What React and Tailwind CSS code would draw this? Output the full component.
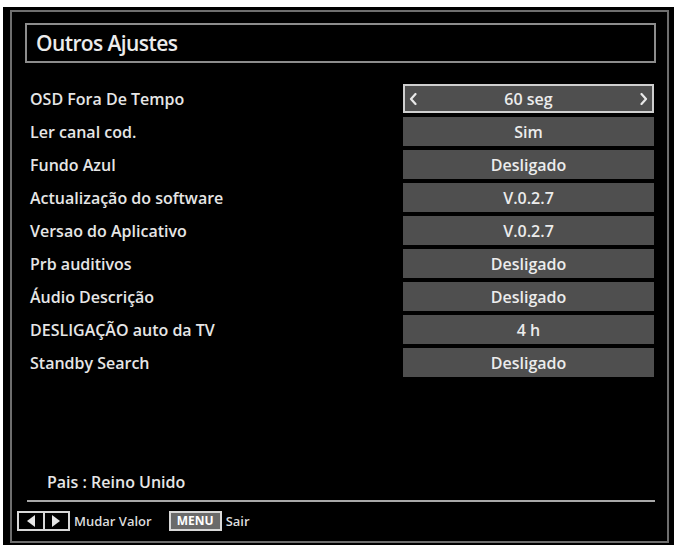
import React from "react";

const rows = [
  ["OSD Fora De Tempo", "60 seg", true],
  ["Ler canal cod.", "Sim"],
  ["Fundo Azul", "Desligado"],
  ["Actualização do software", "V.0.2.7"],
  ["Versao do Aplicativo", "V.0.2.7"],
  ["Prb auditivos", "Desligado"],
  ["Áudio Descrição", "Desligado"],
  ["DESLIGAÇÃO auto da TV", "4 h"],
  ["Standby Search", "Desligado"],
];

const font = { fontFamily: '"Open Sans", "DejaVu Sans", sans-serif' };

function Chevron({ dir }) {
  return (
    <svg width="8" height="13" viewBox="0 0 8 13" className="block">
      <path
        d={dir === "left" ? "M6.5 1.5 L2 6.5 L6.5 11.5" : "M1.5 1.5 L6 6.5 L1.5 11.5"}
        fill="none"
        stroke="#e8e8e8"
        strokeWidth="2.2"
        strokeLinecap="round"
        strokeLinejoin="round"
      />
    </svg>
  );
}

export default function App() {
  return (
    <div className="min-h-screen bg-white pt-[7px] pl-[3px]" style={font}>
      <div className="bg-black h-[538px] pt-[3px] pl-[7px]">
        <div className="border-2 border-[#6e6e6e] w-[659px] h-[533px] flex flex-col">
          <div className="ml-[13px] mt-[11px] w-[631px] h-[40px] border-2 border-[#8c8c8c] flex items-center pl-[9px]">
            <span className="text-[#ececec] text-[21px] font-semibold tracking-[-0.6px] leading-none">
              Outros Ajustes
            </span>
          </div>
          <div className="mt-[21px] flex flex-col gap-[4px]">
            {rows.map(([label, value, sel]) => (
              <div key={label} className="flex items-center h-[29px]">
                <div className="w-[391px] pl-[18px] text-[#e6e6e6] text-[16px] font-semibold leading-none">
                  {label}
                </div>
                <div
                  className={
                    "w-[251px] h-[29px] bg-[#4f4f4f] flex items-center justify-center relative text-[#ececec] text-[16px] font-semibold leading-none " +
                    (sel ? "border-2 border-[#cfcfcf]" : "")
                  }
                >
                  {sel && (
                    <span className="absolute left-[4px] top-1/2 -translate-y-1/2">
                      <Chevron dir="left" />
                    </span>
                  )}
                  {value}
                  {sel && (
                    <span className="absolute right-[4px] top-1/2 -translate-y-1/2">
                      <Chevron dir="right" />
                    </span>
                  )}
                </div>
              </div>
            ))}
          </div>
          <div className="mt-auto flex flex-col">
            <div className="pl-[35px] h-[20px] flex items-center mb-[8px] text-[#e6e6e6] text-[16px] font-semibold leading-none">
              Pais : Reino Unido
            </div>
            <div className="ml-[15px] w-[628px] h-[2px] bg-[#a8a8a8] mb-[9px]" />
            <div className="flex items-center h-[20px] mb-[10px] pl-[5px] text-[#dcdcdc] text-[13px] font-semibold leading-none">
              <div className="w-[53px] h-[20px] border-2 border-[#d8d8d8] flex items-stretch">
                <div className="flex-1 flex items-center justify-center">
                  <svg width="10" height="12" viewBox="0 0 10 12"><path d="M9 0 L1 6 L9 12 Z" fill="#e6e6e6" /></svg>
                </div>
                <div className="w-[2px] bg-[#d8d8d8]" />
                <div className="flex-1 flex items-center justify-center">
                  <svg width="10" height="12" viewBox="0 0 10 12"><path d="M1 0 L9 6 L1 12 Z" fill="#e6e6e6" /></svg>
                </div>
              </div>
              <span className="ml-[4px]">Mudar Valor</span>
              <div className="ml-[17px] w-[53px] h-[20px] border-2 border-[#d8d8d8] bg-[#6a6a6a] flex items-center justify-center text-white text-[12px] font-bold">
                MENU
              </div>
              <span className="ml-[4px]">Sair</span>
            </div>
          </div>
        </div>
      </div>
    </div>
  );
}
